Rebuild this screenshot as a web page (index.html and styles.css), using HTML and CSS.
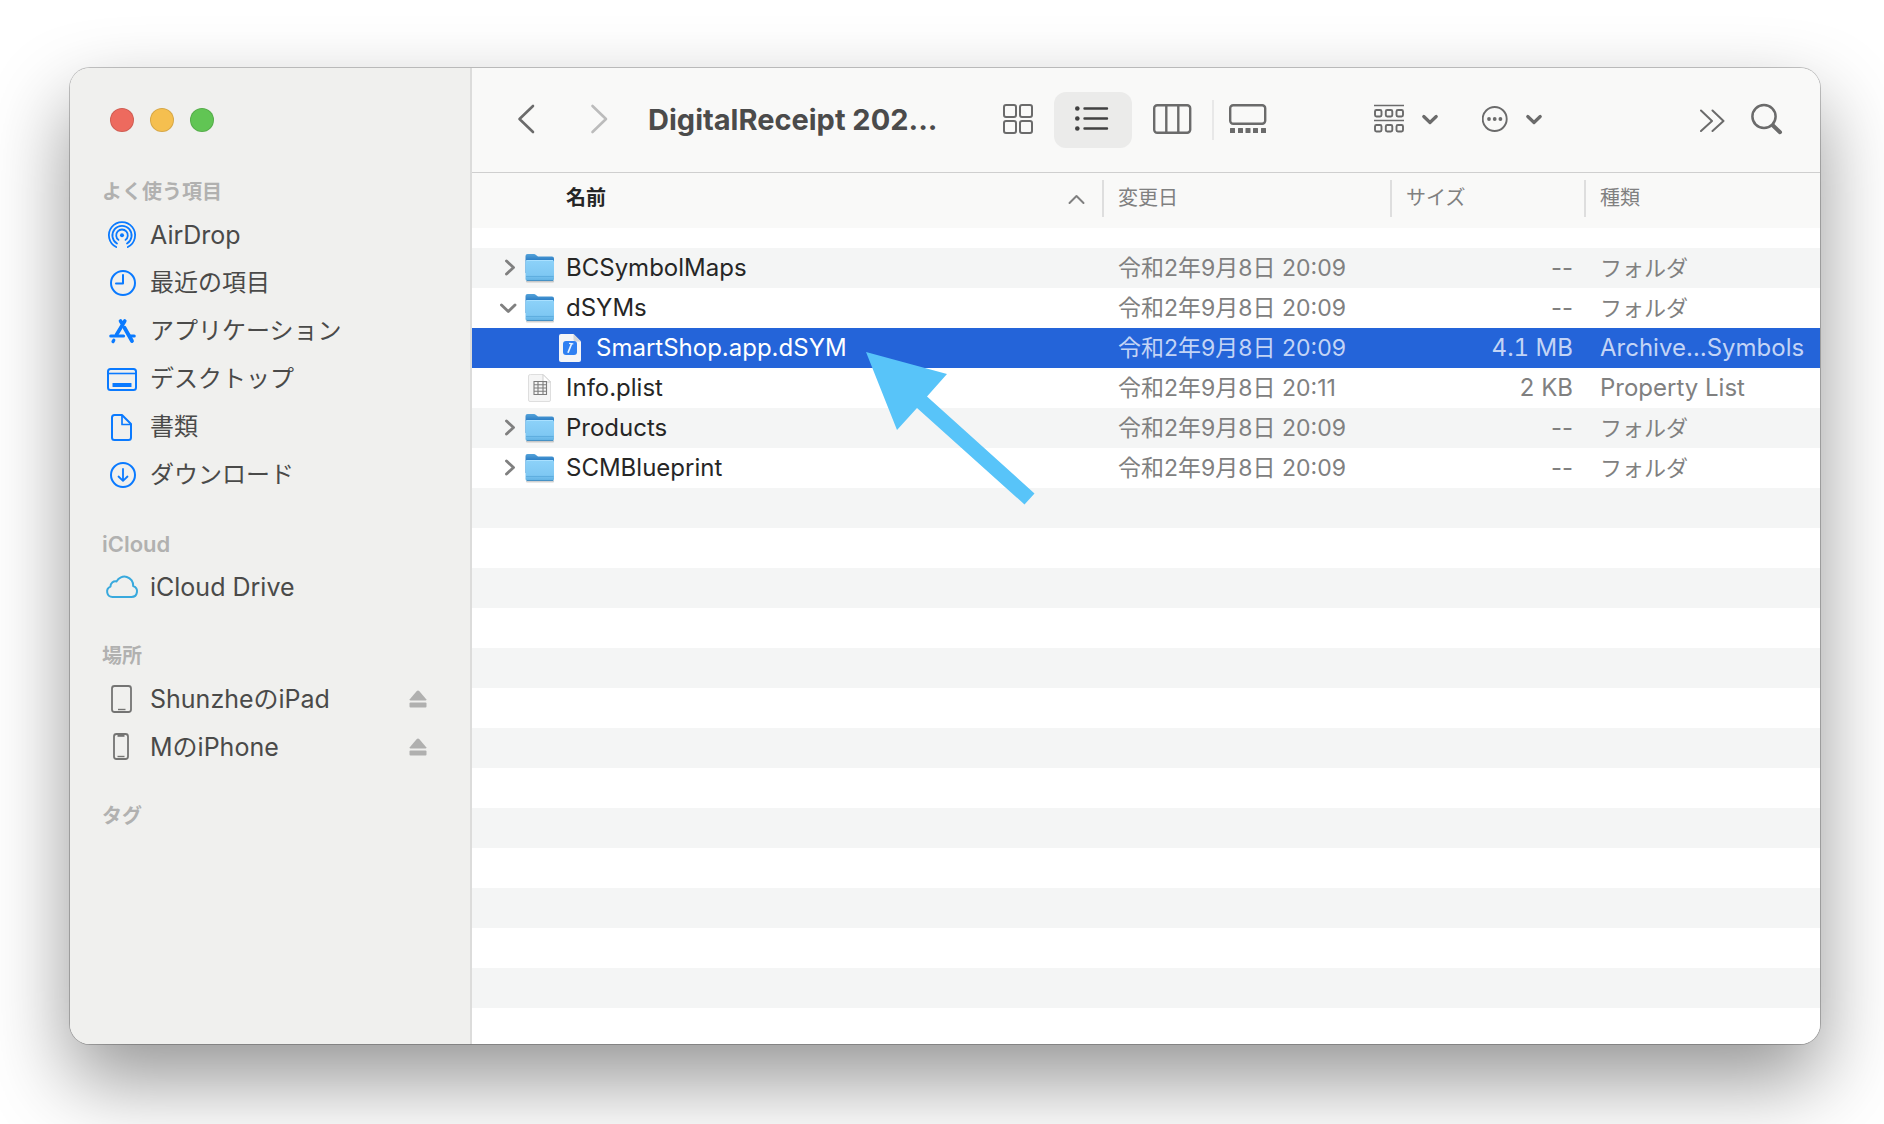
FILE: index.html
```html
<!DOCTYPE html>
<html lang="ja">
<head>
<meta charset="utf-8">
<meta name="viewport" content="width=device-width, initial-scale=1">
<title>DigitalReceipt</title>
<link rel="stylesheet" href="styles.css">
</head>
<body>
<svg class="defs" width="0" height="0" aria-hidden="true">
  <defs>
    <linearGradient id="folder-back" x1="0" y1="0" x2="0" y2="1">
      <stop offset="0" stop-color="#55a3da"/><stop offset=".35" stop-color="#2a7cc4"/>
    </linearGradient>
    <linearGradient id="folder-front" x1="0" y1="0" x2="0" y2="1">
      <stop offset="0" stop-color="#8dd2f9"/><stop offset=".7" stop-color="#7fc8f3"/><stop offset="1" stop-color="#5fb0e2"/>
    </linearGradient>
    <symbol id="folder" viewBox="0 0 30 30">
      <rect x="1" y="27" width="28" height="2.500" rx="1" fill="#000" opacity=".18"/>
      <path d="M.5 3Q.5 1 2.500 1H9Q10 1 11 2L13 3.500H27Q29 3.500 29 5.500V20H.5Z" fill="url(#folder-back)"/>
      <path d="M.5 8.500Q.5 7 2 7H27.500Q29 7 29 8.500V26Q29 28 27 28H2.500Q.5 28 .5 26Z" fill="url(#folder-front)"/>
      <path d="M1.500 7.500H28" stroke="#a9e0ff"/>
      <path d="M1 23.500H28.500" stroke="#56a6da" opacity=".7"/>
      <path d="M2 27.500H28" stroke="#4791c4"/>
    </symbol>
    <symbol id="chevron-right" viewBox="0 0 20 20">
      <path d="M6.500 3L13.500 9.500L6.500 16" fill="none" stroke="currentColor" stroke-width="2.900" stroke-linecap="round" stroke-linejoin="round"/>
    </symbol>
    <symbol id="chevron-down" viewBox="0 0 20 20">
      <path d="M1.500 7L8.300 13.500L15 7" fill="none" stroke="currentColor" stroke-width="2.900" stroke-linecap="round" stroke-linejoin="round"/>
    </symbol>
    <symbol id="menu-arrow" viewBox="0 0 18 12">
      <path d="M1.800 2.500L8 8.500L14.200 2.500" fill="none" stroke="currentColor" stroke-width="3.200" stroke-linecap="round" stroke-linejoin="round"/>
    </symbol>
    <symbol id="eject" viewBox="0 0 18 18">
      <path d="M9 .5Q9.600 .5 10.200 1.100L17.200 9.300Q17.600 10.500 16.500 10.500H1.500Q.4 10.500 .8 9.300L7.800 1.100Q8.400 .5 9 .5Z" fill="currentColor"/>
      <rect x=".5" y="12.500" width="17" height="5" rx="1" fill="currentColor"/>
    </symbol>
  </defs>
</svg>

<main class="window">
  <nav class="sidebar" aria-label="サイドバー">
    <div class="lights">
      <button class="light light-close" aria-label="閉じる"></button>
      <button class="light light-minimize" aria-label="しまう"></button>
      <button class="light light-zoom" aria-label="拡大"></button>
    </div>

    <section class="group">
      <h2 class="group-title">よく使う項目</h2>
      <ul class="places">
        <li class="place">
          <svg class="place-icon" viewBox="0 0 36 36" fill="none" stroke="currentColor" stroke-width="1.800" stroke-linecap="round">
            <circle cx="18" cy="18.300" r="2" fill="currentColor" stroke="none"/>
            <path d="M14.500 22.900A5.800 5.800 0 1 1 21.500 22.900M13 26.600A9.600 9.600 0 1 1 23 26.600M12.200 30A13.100 13.100 0 1 1 23.800 30"/>
          </svg>
          <a class="place-link latin" href="#airdrop">AirDrop</a>
        </li>
        <li class="place">
          <svg class="place-icon" viewBox="0 0 36 36" fill="none" stroke="currentColor" stroke-width="2">
            <circle cx="19" cy="18" r="12"/><path d="M19 10V18.500H12" stroke-linecap="round" stroke-linejoin="round"/>
          </svg>
          <a class="place-link" href="#recents">最近の項目</a>
        </li>
        <li class="place">
          <svg class="place-icon" viewBox="0 0 36 36" fill="none" stroke="currentColor" stroke-width="3.600" stroke-linecap="round">
            <path d="M16.500 8L18.200 10.800M20.800 8L12.500 21.700"/>
            <path d="M20.500 14.700L28 28" stroke-width="3.800"/>
            <path d="M6.800 23H19.500M26.500 23H30.200M9.800 27.200L9 28.600" stroke-width="3.200"/>
          </svg>
          <a class="place-link" href="#applications">アプリケーション</a>
        </li>
        <li class="place">
          <svg class="place-icon" viewBox="0 0 36 36" fill="none" stroke="currentColor" stroke-width="2">
            <rect x="4" y="8" width="28" height="21" rx="2.500"/><path d="M4 12.500H32" stroke-width="1.600"/>
            <rect x="8.500" y="22" width="19" height="4" rx=".6" fill="currentColor" stroke="none"/>
          </svg>
          <a class="place-link" href="#desktop">デスクトップ</a>
        </li>
        <li class="place">
          <svg class="place-icon" viewBox="0 0 36 36" fill="none" stroke="currentColor" stroke-width="2" stroke-linejoin="round">
            <path d="M10.500 6H18L27 15V28.500Q27 31 24.500 31H10.500Q8 31 8 28.500V8.500Q8 6 10.500 6Z"/><path d="M18 6V15.500H27" stroke-width="1.700"/>
          </svg>
          <a class="place-link" href="#documents">書類</a>
        </li>
        <li class="place">
          <svg class="place-icon" viewBox="0 0 36 36" fill="none" stroke="currentColor" stroke-width="2" stroke-linecap="round" stroke-linejoin="round">
            <circle cx="19" cy="18" r="12"/><path d="M19 12V23.500M14.500 19.500L19 23.800L23.500 19.500" stroke-width="1.800"/>
          </svg>
          <a class="place-link" href="#downloads">ダウンロード</a>
        </li>
      </ul>
    </section>

    <section class="group">
      <h2 class="group-title latin-title">iCloud</h2>
      <ul class="places">
        <li class="place">
          <svg class="place-icon cloud" viewBox="0 0 36 36" fill="none" stroke="currentColor" stroke-width="2" stroke-linejoin="round">
            <path d="M8.500 28H27.500A5.600 5.600 0 0 0 29.200 17.100A8.800 8.800 0 0 0 12.600 12.400A5 5 0 0 0 6.500 17.600A5.400 5.400 0 0 0 8.500 28Z"/>
          </svg>
          <a class="place-link latin" href="#icloud-drive">iCloud Drive</a>
        </li>
      </ul>
    </section>

    <section class="group">
      <h2 class="group-title">場所</h2>
      <ul class="places">
        <li class="place">
          <svg class="place-icon device" viewBox="0 0 36 36" fill="none" stroke="currentColor" stroke-width="1.800">
            <rect x="8" y="5" width="19" height="26" rx="2.500"/><path d="M14 28.500H21.500" stroke-width="1.400"/>
          </svg>
          <a class="place-link latin" href="#ipad">ShunzheのiPad</a>
          <button class="eject" aria-label="ShunzheのiPadを取り出す"><svg width="18" height="18"><use href="#eject"/></svg></button>
        </li>
        <li class="place">
          <svg class="place-icon device" viewBox="0 0 36 36" fill="none" stroke="currentColor" stroke-width="1.800">
            <rect x="10" y="5" width="14" height="25" rx="2.500"/><path d="M13.500 6.800H20.500" stroke-width="2"/><path d="M13.500 27.500H20.500" stroke-width="1.400"/>
          </svg>
          <a class="place-link latin" href="#iphone">MのiPhone</a>
          <button class="eject" aria-label="MのiPhoneを取り出す"><svg width="18" height="18"><use href="#eject"/></svg></button>
        </li>
      </ul>
    </section>

    <section class="group">
      <h2 class="group-title">タグ</h2>
    </section>
  </nav>

  <div class="pane">
    <header class="toolbar">
      <button class="tool tool-nav" aria-label="戻る">
        <svg width="20" height="32" viewBox="0 0 20 32" fill="none" stroke="currentColor" stroke-width="2.600" stroke-linecap="round" stroke-linejoin="round"><path d="M17 2L3.500 15L17 28"/></svg>
      </button>
      <button class="tool tool-nav tool-forward" aria-label="進む" disabled>
        <svg width="20" height="32" viewBox="0 0 20 32" fill="none" stroke="currentColor" stroke-width="2.600" stroke-linecap="round" stroke-linejoin="round"><path d="M3.500 2L17 15L3.500 28"/></svg>
      </button>
      <h1 class="title">DigitalReceipt 202...</h1>
      <div class="views">
        <button class="tool tool-grid" aria-label="アイコン">
          <svg width="32" height="32" viewBox="0 0 32 32" fill="none" stroke="currentColor" stroke-width="2"><rect x="2" y="1" width="12" height="12" rx="2"/><rect x="18" y="1" width="12" height="12" rx="2"/><rect x="2" y="17" width="12" height="12" rx="2"/><rect x="18" y="17" width="12" height="12" rx="2"/></svg>
        </button>
        <button class="tool tool-list" aria-label="リスト" aria-pressed="true">
          <svg width="36" height="32" viewBox="0 0 36 32" fill="none" stroke="currentColor" stroke-width="2.400" stroke-linecap="round"><path d="M9.500 4.500H32M9.500 14.500H32M9.500 24.500H32"/><g fill="currentColor" stroke="none"><circle cx="2.300" cy="4.500" r="2.300"/><circle cx="2.300" cy="14.500" r="2.300"/><circle cx="2.300" cy="24.500" r="2.300"/></g></svg>
        </button>
        <button class="tool tool-columns" aria-label="カラム">
          <svg width="40" height="32" viewBox="0 0 40 32" fill="none" stroke="currentColor" stroke-width="2.400"><rect x="2.200" y="1.200" width="36" height="27.600" rx="3"/><path d="M14.300 1V29M26.300 1V29"/></svg>
        </button>
        <span class="divider"></span>
        <button class="tool tool-gallery" aria-label="ギャラリー">
          <svg width="38" height="32" viewBox="0 0 38 32" fill="none" stroke="currentColor" stroke-width="2.400"><rect x="1.200" y="1.200" width="35" height="18.600" rx="3"/><g fill="currentColor" stroke="none"><rect x="1" y="24" width="5" height="5" rx=".5"/><rect x="9" y="24" width="5" height="5" rx=".5"/><rect x="16.500" y="24" width="5" height="5" rx=".5"/><rect x="24" y="24" width="5" height="5" rx=".5"/><rect x="32" y="24" width="5" height="5" rx=".5"/></g></svg>
        </button>
      </div>
      <button class="tool tool-menu tool-group" aria-label="グループ">
        <svg width="30" height="32" viewBox="0 0 30 32" fill="none" stroke="currentColor" stroke-width="1.900"><path d="M0 1.500H30M0 16.500H30" stroke-width="1.700"/><rect x="1" y="6" width="6.500" height="6.500" rx="1.400"/><rect x="11.800" y="6" width="6.500" height="6.500" rx="1.400"/><rect x="22.500" y="6" width="6.500" height="6.500" rx="1.400"/><rect x="1" y="21" width="6.500" height="6.500" rx="1.400"/><rect x="11.800" y="21" width="6.500" height="6.500" rx="1.400"/><rect x="22.500" y="21" width="6.500" height="6.500" rx="1.400"/></svg>
        <svg width="18" height="12"><use href="#menu-arrow"/></svg>
      </button>
      <button class="tool tool-menu tool-action" aria-label="アクション">
        <svg width="26" height="28" viewBox="0 0 26 28" fill="none" stroke="currentColor" stroke-width="1.900"><circle cx="12.700" cy="13" r="12"/><g fill="currentColor" stroke="none"><circle cx="7" cy="13" r="1.900"/><circle cx="12.700" cy="13" r="1.900"/><circle cx="18.400" cy="13" r="1.900"/></g></svg>
        <svg width="18" height="12"><use href="#menu-arrow"/></svg>
      </button>
      <button class="tool tool-more" aria-label="ほかの項目">
        <svg width="26" height="24" viewBox="0 0 26 24" fill="none" stroke="currentColor" stroke-width="2" stroke-linecap="round" stroke-linejoin="round"><path d="M1 2.500L12 13L1 23M12.500 2.500L23.500 13L12.500 23"/></svg>
      </button>
      <button class="tool tool-search" aria-label="検索">
        <svg width="34" height="34" viewBox="0 0 34 34" fill="none" stroke="currentColor" stroke-linecap="round"><circle cx="14" cy="13.500" r="11.600" stroke-width="2.500"/><path d="M23 22.500L30 29.200" stroke-width="4"/></svg>
      </button>
    </header>

    <table class="files">
      <colgroup><col><col class="col-date"><col class="col-size"><col class="col-kind"></colgroup>
      <thead>
        <tr>
          <th scope="col" aria-sort="ascending"><div class="head head-name"><span>名前</span>
            <svg width="18" height="12" viewBox="0 0 18 12" fill="none" stroke="currentColor" stroke-width="2" stroke-linecap="round" stroke-linejoin="round"><path d="M2.500 10L9.500 3L16.500 10"/></svg></div></th>
          <th scope="col"><div class="head">変更日</div></th>
          <th scope="col"><div class="head">サイズ</div></th>
          <th scope="col"><div class="head head-last">種類</div></th>
        </tr>
      </thead>
      <tbody>
        <tr>
          <td><div class="name"><button class="twist" aria-label="開く"><svg width="20" height="20"><use href="#chevron-right"/></svg></button><svg class="file-icon" width="30" height="30"><use href="#folder"/></svg>BCSymbolMaps</div></td>
          <td class="date">令和2年9月8日 20:09</td><td class="size">--</td><td class="kind-ja">フォルダ</td>
        </tr>
        <tr>
          <td><div class="name"><button class="twist" aria-label="閉じる"><svg width="20" height="20"><use href="#chevron-down"/></svg></button><svg class="file-icon" width="30" height="30"><use href="#folder"/></svg>dSYMs</div></td>
          <td class="date">令和2年9月8日 20:09</td><td class="size">--</td><td class="kind-ja">フォルダ</td>
        </tr>
        <tr class="selected" aria-selected="true">
          <td><div class="name name-child"><svg class="file-icon" width="30" height="30" viewBox="0 0 30 30">
            <path d="M6 1H18.500L26 8.500V27Q26 29 24 29H6Q4 29 4 27V3Q4 1 6 1Z" fill="#f4f5f7"/>
            <path d="M18.500 1V6.500Q18.500 8.500 20.500 8.500H26Z" fill="#d3d5d8"/>
            <rect x="8" y="8" width="14" height="14" rx="3" fill="#2f80f2"/>
            <path d="M13 19.800L16.600 10.800" stroke="#e6f2ff" stroke-width="1.700" fill="none"/>
            <path d="M14 10.300L18.300 10.800" stroke="#e6f2ff" stroke-width="1.300" fill="none"/>
          </svg>SmartShop.app.dSYM</div></td>
          <td class="date">令和2年9月8日 20:09</td><td class="size bytes">4.1 MB</td><td class="kind-en">Archive…Symbols</td>
        </tr>
        <tr>
          <td><div class="name name-leaf"><svg class="file-icon" width="30" height="30" viewBox="0 0 30 30">
            <path d="M5.500 1.500H18L25.500 9V27Q25.500 28.500 24 28.500H5Q3.500 28.500 3.500 27V3Q3.500 1.500 5.500 1.500Z" fill="#f5f5f5" stroke="#dedede"/>
            <path d="M18 1.500V9H25.500Z" fill="#fff" stroke="#cfcfcf"/>
            <path d="M9 8.500H21.500V21.500H9ZM9 11.700H21.500M9 15H21.500M9 18.200H21.500M13 8.500V21.500M18 8.500V21.500" fill="none" stroke="#7c7c7c" stroke-width="1.100"/>
          </svg>Info.plist</div></td>
          <td class="date">令和2年9月8日 20:11</td><td class="size bytes">2 KB</td><td class="kind-en">Property List</td>
        </tr>
        <tr>
          <td><div class="name"><button class="twist" aria-label="開く"><svg width="20" height="20"><use href="#chevron-right"/></svg></button><svg class="file-icon" width="30" height="30"><use href="#folder"/></svg>Products</div></td>
          <td class="date">令和2年9月8日 20:09</td><td class="size">--</td><td class="kind-ja">フォルダ</td>
        </tr>
        <tr>
          <td><div class="name"><button class="twist" aria-label="開く"><svg width="20" height="20"><use href="#chevron-right"/></svg></button><svg class="file-icon" width="30" height="30"><use href="#folder"/></svg>SCMBlueprint</div></td>
          <td class="date">令和2年9月8日 20:09</td><td class="size">--</td><td class="kind-ja">フォルダ</td>
        </tr>
      </tbody>
    </table>
    <div class="stripes"></div>

    <svg class="pointer" width="170" height="154" viewBox="0 0 170 154" aria-hidden="true">
      <path d="M0 0L81 22L61 44.500L168.500 141.500L158.500 152.500L51 56L31 78Z" fill="#58c4f9"/>
    </svg>
  </div>
</main>
</body>
</html>
```
FILE: styles.css
```css
:root {
  --accent: #0a7aff;
  --ink: #262626;
  --muted: #808080;
  --tool: #6b6b6b;
  --stripe: #f4f5f5;
}

* {
  box-sizing: border-box;
}

body {
  margin: 0;
  min-height: 100vh;
  padding: 68px 64px 80px 70px;
  display: flex;
  background: #fff;
  color: var(--ink);
  font-family: Inter, "Noto Sans CJK JP", sans-serif;
  font-size: 24px;
}

button {
  border: 0;
  padding: 0;
  background: none;
  color: inherit;
  font: inherit;
}

svg {
  display: block;
  flex: none;
}

.defs {
  position: absolute;
}

.window {
  flex: 1;
  min-width: 0;
  display: flex;
  overflow: hidden;
  border-radius: 20px;
  background: #fff;
  box-shadow: 0 0 0 1px rgba(0, 0, 0, .22), 0 36px 80px rgba(0, 0, 0, .42);
}

/* Sidebar */

.sidebar {
  flex: 0 0 402px;
  display: flex;
  flex-direction: column;
  gap: 26px;
  background: #f0f0ee;
  border-right: 2px solid #dcdcdb;
}

.lights {
  display: flex;
  gap: 16px;
  padding: 40px 40px 15px;
}

.light {
  width: 24px;
  height: 24px;
  border-radius: 50%;
  border: 1px solid rgba(0, 0, 0, .12);
}

.light-close { background: #ed6a5e; }
.light-minimize { background: #f5bf4f; }
.light-zoom { background: #61c554; }

.group-title {
  margin: 0;
  padding-left: 32px;
  font-size: 20px;
  line-height: 38px;
  font-weight: 600;
  color: #b1b1b0;
}

.latin-title {
  font-size: 22px;
}

.places {
  margin: 0;
  padding: 0;
  list-style: none;
}

.place {
  display: flex;
  align-items: center;
  height: 48px;
  padding: 0 43px 0 34px;
}

.place-icon {
  width: 36px;
  height: 36px;
  margin-right: 10px;
  color: var(--accent);
}

.cloud { color: #38a9dd; }
.device { color: #747473; }

.place-link {
  flex: 1;
  height: 32px;
  line-height: 32px;
  color: #4a4a49;
  text-decoration: none;
  white-space: nowrap;
}

.latin {
  font-size: 25px;
}

.eject {
  color: #b0b0af;
}

/* Toolbar */

.pane {
  flex: 1;
  min-width: 0;
  position: relative;
  display: flex;
  flex-direction: column;
}

.toolbar {
  display: flex;
  align-items: center;
  height: 105px;
  padding: 0 36px 0 30px;
  background: #f9f9f8;
  border-bottom: 1px solid #cfcfcf;
}

.tool {
  display: flex;
  align-items: center;
  justify-content: center;
  height: 56px;
  color: var(--tool);
}

.tool-nav {
  width: 48px;
}

.tool-forward {
  margin: 0 25px 0 25px;
  color: #bcbcbc;
}

.title {
  flex: 1;
  min-width: 0;
  margin: 0;
  overflow: hidden;
  font-size: 29px;
  line-height: 40px;
  font-weight: 700;
  white-space: nowrap;
  color: #4b4b4b;
}

.views {
  display: flex;
  align-items: center;
}

.tool-grid { width: 72px; }

.tool-list {
  width: 78px;
  border-radius: 12px;
  background: #ebebea;
  color: #414141;
}

.tool-columns { width: 80px; }
.tool-gallery { width: 68px; }

.divider {
  width: 2px;
  height: 40px;
  background: #e8e8e8;
}

.tool-menu {
  gap: 18px;
}

.tool-group { margin-left: 92px; }
.tool-action { margin-left: 42px; }
.tool-more { margin-left: 156px; }
.tool-search { margin-left: 24px; }

/* File list */

.files {
  width: 100%;
  table-layout: fixed;
  border-spacing: 0;
}

.col-date { width: 288px; }
.col-size { width: 194px; }
.col-kind { width: 234px; }

th {
  padding: 7px 0 11px;
  background: #f9f9f8;
  border-bottom: 20px solid #fff;
  font-size: 20px;
  font-weight: 400;
  color: var(--muted);
  text-align: left;
}

.head {
  height: 37px;
  padding-left: 14px;
  line-height: 37px;
  border-right: 2px solid #dedede;
}

.head-name {
  display: flex;
  align-items: center;
  justify-content: space-between;
  padding: 0 17px 0 94px;
}

.head-name span {
  font-weight: 600;
  color: var(--ink);
}

.head-last {
  border-right: 0;
}

td {
  height: 40px;
  padding: 0 0 0 14px;
  line-height: 32px;
  color: var(--muted);
  white-space: nowrap;
}

td:first-child {
  padding-left: 28px;
  color: var(--ink);
}

tbody tr:nth-child(odd) {
  background: var(--stripe);
}

.name {
  display: flex;
  align-items: center;
}

.name-child { padding-left: 55px; }
.name-leaf { padding-left: 25px; }

.twist {
  margin-right: 5px;
  color: var(--muted);
}

.file-icon {
  margin-right: 11px;
}

.date { font-size: 23px; }
.kind-ja { font-size: 22px; }

.size {
  padding-right: 13px;
  text-align: right;
}

.bytes {
  font-variant-numeric: tabular-nums;
}

tbody tr.selected {
  background: #2464d9;
}

.selected td {
  color: #c3d4f6;
}

.selected td:first-child {
  color: #fff;
}

.stripes {
  flex: 1;
  background: repeating-linear-gradient(var(--stripe) 0 40px, #fff 40px 80px);
}

.pointer {
  position: absolute;
  left: 394px;
  top: 284px;
}
```
